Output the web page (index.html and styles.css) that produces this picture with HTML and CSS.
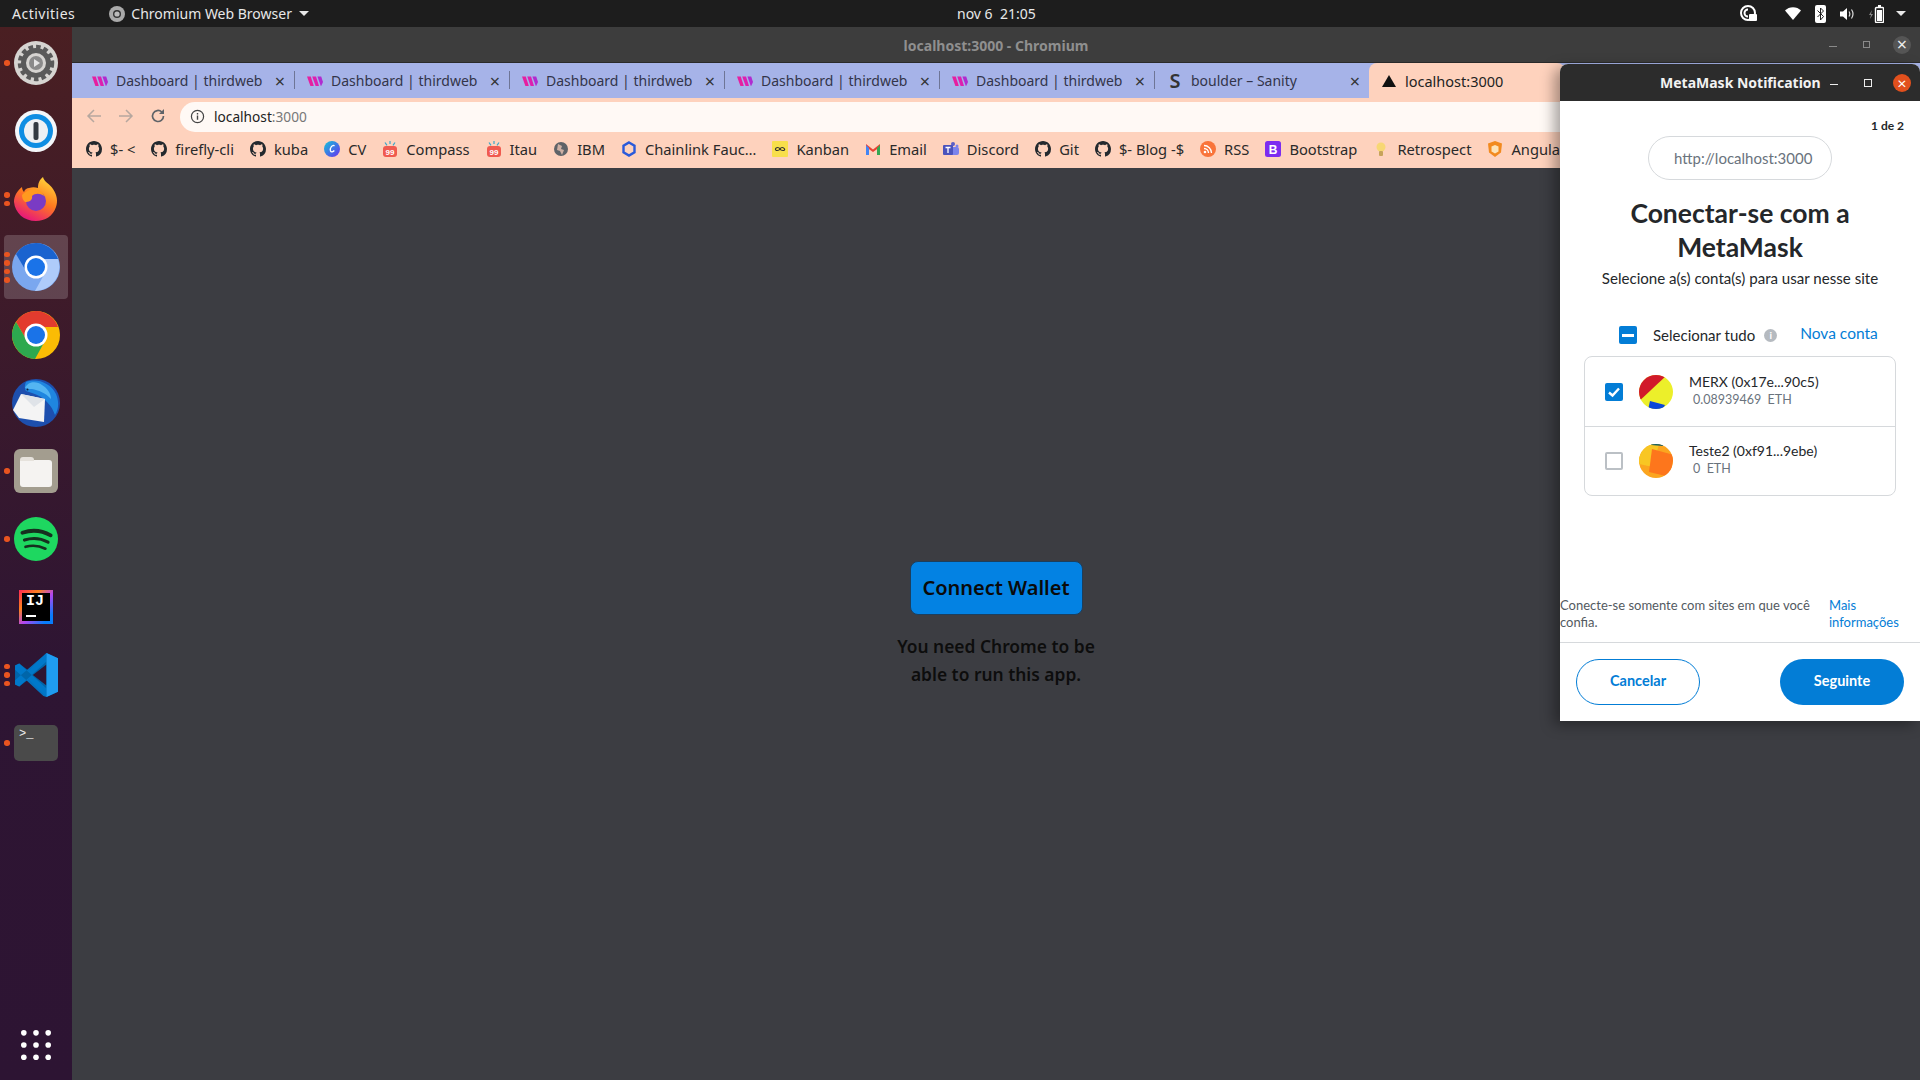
FILE: index.html
```html
<!DOCTYPE html>
<html lang="pt">
<head>
    <meta charset="UTF-8">
    <meta name="viewport" content="width=device-width, initial-scale=1.0">
    <title>localhost:3000 - Chromium</title>
    <link rel="stylesheet" href="styles.css">
</head>
<body>

    <!-- Simbolos reutilizados -->
    <svg class="sprites" width="0" height="0">
        <defs>
            <symbol id="github" viewBox="0 0 16 16">
                <path fill="#24292e" d="M8 0C3.58 0 0 3.58 0 8c0 3.54 2.29 6.53 5.47 7.59.4.07.55-.17.55-.38 0-.19-.01-.82-.01-1.49-2.01.37-2.53-.49-2.69-.94-.09-.23-.48-.94-.82-1.13-.28-.15-.68-.52-.01-.53.63-.01 1.08.58 1.23.82.72 1.21 1.87.87 2.33.66.07-.52.28-.87.51-1.07-1.78-.2-3.64-.89-3.64-3.95 0-.87.31-1.59.82-2.15-.08-.2-.36-1.02.08-2.12 0 0 .67-.21 2.2.82.64-.18 1.32-.27 2-.27.68 0 1.36.09 2 .27 1.53-1.04 2.2-.82 2.2-.82.44 1.1.16 1.92.08 2.12.51.56.82 1.27.82 2.15 0 3.07-1.87 3.75-3.65 3.95.29.25.54.73.54 1.48 0 1.07-.01 1.93-.01 2.2 0 .21.15.46.55.38A8.013 8.013 0 0016 8c0-4.42-3.58-8-8-8z"/>
            </symbol>
            <symbol id="thirdweb" viewBox="0 0 16 16">
                <path fill="#e61fa0" d="M0 3.500h3.800L6.800 13H3.400z"/>
                <path fill="#de1fb0" d="M5.200 3.500H9L12 13H8.600z"/>
                <path fill="#b02bd0" d="M10.400 3.500h3.800L16 9l-1.800 4H13.800z"/>
            </symbol>
            <symbol id="compass" viewBox="0 0 16 16">
                <path stroke="#3aa6c9" stroke-width="1.200" d="M8 0v3M3 1.500l2 2.900M13 1.500l-2 2.900"/>
                <rect fill="#f05a4f" x="1" y="5" width="14" height="11" rx="3"/>
                <text x="8" y="14" font-size="8" font-weight="700" text-anchor="middle" fill="#fff" font-family="Liberation Sans, sans-serif">99</text>
            </symbol>
        </defs>
    </svg>

    <!-- Barra superior do sistema -->
    <header class="topbar">
        <span class="activities">Activities</span>
        <span class="app-menu">
            <svg class="app-menu-icon" viewBox="0 0 16 16"><circle cx="8" cy="8" r="8" fill="#aaa"/><circle cx="8" cy="8" r="4" fill="#333"/><circle cx="8" cy="8" r="2.600" fill="#bbb"/></svg>
            Chromium Web Browser
            <i class="caret"></i>
        </span>
        <span class="clock">nov 6&nbsp; 21:05</span>
        <div class="tray">
            <svg class="tray-lock" viewBox="0 0 18 18"><circle cx="8" cy="8" r="7" fill="none" stroke="#fff" stroke-width="2"/><path d="M8 4.500a3.500 3.500 0 1 0 0 7" fill="none" stroke="#fff" stroke-width="2"/><rect x="9" y="9" width="8" height="7" rx="1" fill="#fff"/></svg>
            <svg class="tray-wifi" viewBox="0 0 16 13"><path fill="#fff" d="M0 3.500C4-1 12-1 16 3.500L8 13z"/></svg>
            <svg class="tray-bt" viewBox="0 0 11 18"><rect width="11" height="18" rx="2" fill="#fff"/><path d="M2.500 5.500l6 6L5.500 15V3l3 3-6 6" fill="none" stroke="#222" stroke-width="1"/></svg>
            <svg class="tray-sound" viewBox="0 0 15 14"><path fill="#fff" d="M0 4.500h3L7 1v12L3 9.500H0z"/><path d="M9 4.500c1 1.500 1 3.500 0 5M11.500 2.500c2 3 2 6 0 9" fill="none" stroke="#ddd" stroke-width="1.200"/></svg>
            <svg class="tray-batt" viewBox="0 0 15 18"><path fill="#888" d="M3 5 0 10h2l-1 4 3-5H2z"/><rect x="6.500" y="2.500" width="8" height="15" rx="1" fill="none" stroke="#fff" stroke-width="1.400"/><rect x="9" y="0" width="3" height="2" fill="#fff"/><rect x="8" y="5" width="5" height="11" fill="#fff"/></svg>
            <i class="caret"></i>
        </div>
    </header>

    <div class="desktop">
        <!-- Dock lateral -->
        <nav class="dock">
            <div class="dock-item">
                <span class="pips"><i></i></span>
                <svg viewBox="0 0 44 44" class="dock-icon">
                    <circle cx="22" cy="22" r="22" fill="#d6d4d1"/>
                    <circle cx="22" cy="22" r="12.500" fill="none" stroke="#5a5a5a" stroke-width="5"/>
                    <circle cx="22" cy="22" r="16" fill="none" stroke="#5a5a5a" stroke-width="4.500" stroke-dasharray="4.500 3"/>
                    <circle cx="22" cy="22" r="7" fill="#8a8a8a"/>
                    <path d="M20 18l6 4-6 4z" fill="#e4e4e4"/>
                </svg>
            </div>
            <div class="dock-item">
                <svg viewBox="0 0 44 44" class="dock-icon">
                    <circle cx="22" cy="22" r="21" fill="#f4f7fa"/>
                    <circle cx="22" cy="22" r="17" fill="#0f8ee3"/>
                    <circle cx="22" cy="22" r="12" fill="#eef1f4"/>
                    <rect x="19.500" y="13" width="5" height="18" rx="2" fill="#333a42"/>
                </svg>
            </div>
            <div class="dock-item">
                <span class="pips"><i></i><i></i></span>
                <svg viewBox="0 0 44 44" class="dock-icon">
                    <defs>
                        <linearGradient id="fox" x1="0.800" y1="0" x2="0.300" y2="1">
                            <stop offset="0" stop-color="#ffd93b"/>
                            <stop offset="0.500" stop-color="#ff7a1f"/>
                            <stop offset="1" stop-color="#e6127f"/>
                        </linearGradient>
                    </defs>
                    <path fill="url(#fox)" d="M29 0c1 5 7 7 10 12 4 6 5 12 3 18-3 9-11 14-20 14C10 44 1 36 0 25c0-6 3-11 8-15 0 2 1 4 2 5 1-3 3-4 5-4 3-1 6-1 9 0 0-4 1-8 5-11z"/>
                    <circle cx="22" cy="24" r="10" fill="#7a3bc4"/>
                    <path fill="#ff9a1f" d="M8 18c4-4 10-7 16-5 3 1 5 3 6 6-4-3-9-3-12 0 1 5-4 6-7 6-2-2-3-4-3-7z"/>
                </svg>
            </div>
            <div class="dock-item dock-item-active">
                <span class="pips"><i></i><i></i><i></i><i></i></span>
                <svg viewBox="0 0 48 48" class="dock-icon dock-icon-big">
                    <circle cx="24" cy="24" r="24" fill="#7aa7ef"/>
                    <path fill="#1a63cf" d="M24 0A24 24 0 0 0 4 11l10 17 10-12h22A24 24 0 0 0 24 0z"/>
                    <path fill="#aecbfa" d="M46 16h-22l10 12-11 20h1a24 24 0 0 0 22-32z"/>
                    <circle cx="24" cy="24" r="11.500" fill="#fff"/>
                    <circle cx="24" cy="24" r="9" fill="#1a73e8"/>
                </svg>
            </div>
            <div class="dock-item">
                <svg viewBox="0 0 48 48" class="dock-icon dock-icon-big">
                    <circle cx="24" cy="24" r="24" fill="#fbbc04"/>
                    <path fill="#e33b2e" d="M24 0A24 24 0 0 0 4 11l10 17 10-12h22A24 24 0 0 0 24 0z"/>
                    <path fill="#2da94f" d="M4 11A24 24 0 0 0 23 48l11-20-20 0z"/>
                    <circle cx="24" cy="24" r="11.500" fill="#fff"/>
                    <circle cx="24" cy="24" r="9" fill="#1a73e8"/>
                </svg>
            </div>
            <div class="dock-item">
                <svg viewBox="0 0 48 48" class="dock-icon dock-icon-big">
                    <circle cx="24" cy="24" r="24" fill="#1d4fae"/>
                    <path fill="#1f86e0" d="M14 3c10-4 24 0 30 12 3 7 3 15-1 21-3-9-10-18-23-22l-6-2c-2-3-1-7 0-9z"/>
                    <path fill="#54b5f2" d="M13 9c3-7 12-7 17-3 5 3 9 8 9 14-5-6-13-9-19-10-2 0-5 0-7-1z"/>
                    <circle cx="15.500" cy="10.500" r="1" fill="#14233f"/>
                    <path fill="#f4f4f4" d="M9 15 33 20l-1 23-25-4-6-8z"/>
                    <path fill="#dfe3e8" d="M9 15 33 20 22 28z"/>
                </svg>
            </div>
            <div class="dock-item">
                <span class="pips"><i></i></span>
                <div class="files-icon"><span class="folder"></span></div>
            </div>
            <div class="dock-item">
                <span class="pips"><i></i></span>
                <svg viewBox="0 0 42 42" class="dock-icon">
                    <circle cx="21" cy="21" r="21" fill="#1ed760"/>
                    <path d="M8 15c9-3 19-2 27 2.500" fill="none" stroke="#16301f" stroke-width="3.600" stroke-linecap="round"/>
                    <path d="M10 22c8-2.500 16-1.500 22.500 2" fill="none" stroke="#16301f" stroke-width="3" stroke-linecap="round"/>
                    <path d="M11 28.500c7-2 13-1.200 19 1.800" fill="none" stroke="#16301f" stroke-width="2.500" stroke-linecap="round"/>
                </svg>
            </div>
            <div class="dock-item">
                <div class="idea-icon"><div class="idea-inner">IJ<i></i></div></div>
            </div>
            <div class="dock-item">
                <span class="pips"><i></i><i></i><i></i></span>
                <svg viewBox="0 0 42 42" class="dock-icon">
                    <path fill="#0065a9" d="M31 0 14 17 5 10 1 12v18l4 2 9-7 17 17 11-5V5zM31 11v20L18 21z"/>
                    <path fill="#007acc" d="M1 12l4-2 26 24v8l-3-1L1 16zM1 30l4 2 26-24V0L1 26z" opacity="0.900"/>
                    <path fill="#1f9cf0" d="M31 0l11 5v32l-11 5z"/>
                </svg>
            </div>
            <div class="dock-item">
                <span class="pips"><i></i></span>
                <div class="term-icon">&gt;_</div>
            </div>
            <svg viewBox="0 0 32 32" class="apps-grid">
                <g fill="#fff">
                    <circle cx="3" cy="3" r="3"/><circle cx="16" cy="3" r="3"/><circle cx="29" cy="3" r="3"/>
                    <circle cx="3" cy="16" r="3"/><circle cx="16" cy="16" r="3"/><circle cx="29" cy="16" r="3"/>
                    <circle cx="3" cy="29" r="3"/><circle cx="16" cy="29" r="3"/><circle cx="29" cy="29" r="3"/>
                </g>
            </svg>
        </nav>

        <!-- Janela do navegador -->
        <main class="browser">
            <div class="titlebar">
                <span class="title-text">localhost:3000 - Chromium</span>
                <div class="win-controls">
                    <i class="win-min"></i>
                    <i class="win-restore"></i>
                    <span class="win-close">&times;</span>
                </div>
            </div>

            <div class="tabstrip">
                <div class="tab"><svg class="fav"><use href="#thirdweb"/></svg><span class="tab-title">Dashboard | thirdweb</span><span class="tab-x">&times;</span></div>
                <div class="tab"><svg class="fav"><use href="#thirdweb"/></svg><span class="tab-title">Dashboard | thirdweb</span><span class="tab-x">&times;</span></div>
                <div class="tab"><svg class="fav"><use href="#thirdweb"/></svg><span class="tab-title">Dashboard | thirdweb</span><span class="tab-x">&times;</span></div>
                <div class="tab"><svg class="fav"><use href="#thirdweb"/></svg><span class="tab-title">Dashboard | thirdweb</span><span class="tab-x">&times;</span></div>
                <div class="tab"><svg class="fav"><use href="#thirdweb"/></svg><span class="tab-title">Dashboard | thirdweb</span><span class="tab-x">&times;</span></div>
                <div class="tab tab-last"><span class="fav fav-s">S</span><span class="tab-title">boulder – Sanity</span><span class="tab-x">&times;</span></div>
                <div class="tab tab-active"><svg class="fav" viewBox="0 0 16 16"><path d="M8 2l7 12H1z" fill="#111"/></svg><span class="tab-title">localhost:3000</span></div>
            </div>

            <div class="toolbar">
                <svg class="nav-btn" viewBox="0 0 16 16"><path d="M15 8H2M8 2 2 8l6 6" fill="none" stroke="#b6a79f" stroke-width="1.500"/></svg>
                <svg class="nav-btn" viewBox="0 0 16 16"><path d="M1 8h13M8 2l6 6-6 6" fill="none" stroke="#b6a79f" stroke-width="1.500"/></svg>
                <svg class="nav-btn" viewBox="0 0 16 16"><path d="M13.500 8A5.500 5.500 0 1 1 11.800 4" fill="none" stroke="#5f6368" stroke-width="1.700"/><path d="M14 1v5H9z" fill="#5f6368"/></svg>
                <div class="omnibox">
                    <svg class="omni-info" viewBox="0 0 16 16"><circle cx="8" cy="8" r="6.500" fill="none" stroke="#444" stroke-width="1.300"/><path d="M8 7v4.500M8 4.300v1.500" stroke="#444" stroke-width="1.500"/></svg>
                    <span class="omni-host">localhost</span><span class="omni-port">:3000</span>
                </div>
            </div>

            <div class="bookmarks">
                <span class="bm"><svg class="bm-ico"><use href="#github"/></svg>$- &lt;</span>
                <span class="bm"><svg class="bm-ico"><use href="#github"/></svg>firefly-cli</span>
                <span class="bm"><svg class="bm-ico"><use href="#github"/></svg>kuba</span>
                <span class="bm"><svg class="bm-ico" viewBox="0 0 16 16"><defs><linearGradient id="cv" x1="0" y1="0" x2="1" y2="1"><stop offset="0" stop-color="#13c4d8"/><stop offset="1" stop-color="#6a2ff0"/></linearGradient></defs><circle cx="8" cy="8" r="8" fill="url(#cv)"/><path d="M10.500 5c-2-2-5 2-4 5 .6 1.500 2.600 1 3.800-.5" fill="none" stroke="#fff" stroke-width="1.300"/></svg>CV</span>
                <span class="bm"><svg class="bm-ico"><use href="#compass"/></svg>Compass</span>
                <span class="bm"><svg class="bm-ico"><use href="#compass"/></svg>Itau</span>
                <span class="bm"><svg class="bm-ico" viewBox="0 0 16 16"><circle cx="8" cy="8" r="7" fill="#5f6368"/><path d="M5 3l4 2-1 3 3 1-2 5-2-4-3-1z" fill="#fed2bd" opacity="0.700"/></svg>IBM</span>
                <span class="bm"><svg class="bm-ico" viewBox="0 0 16 16"><path d="M8 1.500l5.500 3.200v6.600L8 14.500l-5.500-3.200V4.700z" fill="none" stroke="#2a5ada" stroke-width="2.400"/></svg>Chainlink Fauc…</span>
                <span class="bm"><svg class="bm-ico" viewBox="0 0 16 16"><rect width="16" height="16" rx="1" fill="#f8df4b"/><path d="M8 8c-1-2-4-2-4.500 0S7 10 8 8s3.500-2 4.500 0S9 10 8 8z" fill="none" stroke="#333" stroke-width="1.200"/></svg>Kanban</span>
                <span class="bm"><svg class="bm-ico" viewBox="0 0 16 16"><path fill="#ea4335" d="M1 3l7 5.500L15 3v3L8 11 1 6z"/><path fill="#4285f4" d="M1 4v10h3V7z"/><path fill="#34a853" d="M15 4v10h-3V7z"/></svg>Email</span>
                <span class="bm"><svg class="bm-ico" viewBox="0 0 16 16"><circle cx="10" cy="3" r="2" fill="#5b5fc7"/><circle cx="14" cy="5" r="1.500" fill="#7b83eb"/><rect x="7" y="6" width="9" height="8" rx="2" fill="#7b83eb"/><rect x="0" y="4" width="10" height="10" rx="1" fill="#4b53bc"/><path d="M2.500 6.500h5M5 6.500V12" stroke="#fff" stroke-width="1.300"/></svg>Discord</span>
                <span class="bm"><svg class="bm-ico"><use href="#github"/></svg>Git</span>
                <span class="bm"><svg class="bm-ico"><use href="#github"/></svg>$- Blog -$</span>
                <span class="bm"><svg class="bm-ico" viewBox="0 0 16 16"><circle cx="8" cy="8" r="8" fill="#f9743a"/><circle cx="5" cy="11" r="1.300" fill="#fff"/><path d="M4 7.500A4.500 4.500 0 0 1 8.500 12M4 4.500A7.500 7.500 0 0 1 11.500 12" fill="none" stroke="#fff" stroke-width="1.300"/></svg>RSS</span>
                <span class="bm"><svg class="bm-ico" viewBox="0 0 16 16"><rect width="16" height="16" rx="2.500" fill="#7c2cf0"/><text x="8" y="12.500" font-size="12" font-weight="700" text-anchor="middle" fill="#fff" font-family="Liberation Sans, sans-serif">B</text></svg>Bootstrap</span>
                <span class="bm"><svg class="bm-ico" viewBox="0 0 16 16"><circle cx="8" cy="6" r="4.500" fill="#f7d774"/><rect x="6" y="10" width="4" height="5" rx="1" fill="#c7a35a"/></svg>Retrospect</span>
                <span class="bm"><svg class="bm-ico" viewBox="0 0 16 16"><path d="M8 0l7 2.500-1 9L8 16l-6-4.500-1-9z" fill="#f28a1e"/><path d="M8 4l3.500 1.500v5L8 12.500 4.500 10.500v-5z" fill="#fde3b8"/></svg>Angular</span>
            </div>

            <div class="page">
                <button class="connect-btn">Connect Wallet</button>
                <p class="page-note">You need Chrome to be<br>able to run this app.</p>
            </div>
        </main>

        <!-- Janela de notificacao da MetaMask -->
        <section class="popup">
            <div class="popup-bar">
                <span class="popup-title">MetaMask Notification</span>
                <i class="win-min popup-min"></i>
                <i class="popup-max"></i>
                <span class="popup-close">&times;</span>
            </div>
            <div class="popup-body">
                <div class="step">1 de 2</div>
                <div class="origin">http://localhost:3000</div>
                <h2 class="mm-title">Conectar-se com a<br>MetaMask</h2>
                <p class="mm-sub">Selecione a(s) conta(s) para usar nesse site</p>
                <div class="select-row">
                    <span class="check check-on"><i class="dash"></i></span>
                    <span class="select-label">Selecionar tudo</span>
                    <span class="info-dot">i</span>
                    <a class="new-account">Nova conta</a>
                </div>
                <div class="accounts">
                    <div class="account">
                        <span class="check check-on">
                            <svg viewBox="0 0 18 18"><path d="M4 9.500l3.500 3L14 5.500" fill="none" stroke="#fff" stroke-width="2.400"/></svg>
                        </span>
                        <svg class="avatar" viewBox="0 0 34 34">
                            <rect width="34" height="34" fill="#ecef2a"/>
                            <path d="M0 0h28L-2 28z" fill="#d11a2a"/>
                            <path d="M11 26l15 4-3 6-14-1z" fill="#0a47d8"/>
                        </svg>
                        <div class="account-info">
                            <div class="account-name">MERX (0x17e...90c5)</div>
                            <div class="account-bal">0.08939469 &nbsp;ETH</div>
                        </div>
                    </div>
                    <div class="account account-next">
                        <span class="check"></span>
                        <svg class="avatar" viewBox="0 0 34 34">
                            <rect width="34" height="34" fill="#fba51f"/>
                            <path d="M0 0h20l-6 23L0 20z" fill="#f8c623"/>
                            <path d="M13 5l22 6-4 22-21-5z" fill="#fd761c"/>
                            <path d="M12 0h12v2l-12-1z" fill="#115e67"/>
                        </svg>
                        <div class="account-info">
                            <div class="account-name">Teste2 (0xf91...9ebe)</div>
                            <div class="account-bal">0 &nbsp;ETH</div>
                        </div>
                    </div>
                </div>
                <div class="trust">
                    <span class="trust-text">Conecte-se somente com sites em que você confia.</span>
                    <a class="trust-link">Mais informações</a>
                </div>
                <div class="actions">
                    <button class="mm-btn mm-cancel">Cancelar</button>
                    <button class="mm-btn mm-next">Seguinte</button>
                </div>
            </div>
        </section>
    </div>

</body>
</html>
```

FILE: styles.css
```css
* {
    box-sizing: border-box;
}

body {
    margin: 0;
    width: 1920px;
    height: 1080px;
    overflow: hidden;
    font-family: "Noto Sans", sans-serif;
    background: #3c3d42;
}

.sprites {
    position: absolute;
}

/* Barra superior */
.topbar {
    position: relative;
    height: 27px;
    display: flex;
    align-items: center;
    background: #1d1d1d;
    color: #e8e8e8;
    font-size: 14px;
}

.activities {
    margin-left: 12px;
    letter-spacing: 0.5px;
}

.app-menu {
    display: flex;
    align-items: center;
    margin-left: 34px;
}

.app-menu-icon {
    width: 16px;
    height: 16px;
    margin-right: 6px;
}

.caret {
    display: inline-block;
    border-left: 5px solid transparent;
    border-right: 5px solid transparent;
    border-top: 5px solid #e8e8e8;
    margin-left: 7px;
}

.clock {
    position: absolute;
    left: 957px;
    width: 78px;
    white-space: nowrap;
    text-align: center;
}

.tray {
    margin-left: auto;
    display: flex;
    align-items: center;
    gap: 14px;
    padding-right: 14px;
}

.tray .caret {
    margin-left: -2px;
}

.tray-lock {
    width: 18px;
    height: 18px;
    margin-right: 13px;
}

.tray-wifi {
    width: 16px;
    height: 13px;
}

.tray-bt {
    width: 11px;
    height: 18px;
}

.tray-sound {
    width: 15px;
    height: 14px;
}

.tray-batt {
    width: 15px;
    height: 18px;
}

/* Area de trabalho */
.desktop {
    position: relative;
    display: flex;
    height: 1053px;
}

/* Dock */
.dock {
    width: 72px;
    flex-shrink: 0;
    display: flex;
    flex-direction: column;
    align-items: center;
    padding-top: 2px;
    background: linear-gradient(180deg, #4a1f22 0%, #3c1a2b 30%, #2e1533 60%, #2d1433 100%);
}

.dock-item {
    position: relative;
    width: 64px;
    height: 68px;
    display: flex;
    align-items: center;
    justify-content: center;
    flex-shrink: 0;
}

.dock-item-active {
    background: rgba(255, 255, 255, 0.18);
    border-radius: 4px;
    height: 64px;
    margin: 2px 0;
}

.pips {
    position: absolute;
    left: 0;
    top: 0;
    bottom: 0;
    width: 6px;
    display: flex;
    flex-direction: column;
    justify-content: center;
    gap: 3px;
}

.pips i {
    width: 5.500px;
    height: 5.500px;
    border-radius: 50%;
    background: #e95420;
}

.dock-icon {
    width: 44px;
    height: 44px;
}

.dock-icon-big {
    width: 48px;
    height: 48px;
}

.files-icon {
    width: 44px;
    height: 44px;
    padding: 9px 6px 8px;
    background: #a39d8f;
    border-radius: 6px;
}

.folder {
    position: relative;
    display: block;
    height: 100%;
    margin-top: 2px;
    background: #f5f3f1;
    border-radius: 0 3px 3px 3px;
}

.folder::before {
    content: "";
    position: absolute;
    left: 0;
    top: -3px;
    width: 14px;
    height: 4px;
    background: #e6e2dc;
    border-radius: 3px 3px 0 0;
}

.idea-icon {
    width: 34px;
    height: 34px;
    padding: 3px;
    background: linear-gradient(135deg, #fe2857 0%, #fc801d 30%, #b345f1 55%, #087cfa 85%);
}

.idea-inner {
    position: relative;
    height: 100%;
    padding: 1px 0 0 4px;
    background: #000;
    color: #fff;
    font-family: "Liberation Mono", monospace;
    font-size: 15px;
    font-weight: 700;
    line-height: 15px;
}

.idea-inner i {
    position: absolute;
    left: 4px;
    bottom: 4px;
    width: 10px;
    height: 2px;
    background: #fff;
}

.term-icon {
    width: 44px;
    height: 36px;
    padding-left: 5px;
    background: #4a4a4a;
    border-radius: 5px;
    color: #eee;
    font-family: "Liberation Mono", monospace;
    font-size: 12px;
    line-height: 18px;
}

.apps-grid {
    width: 30px;
    height: 30px;
    margin-top: auto;
    margin-bottom: 20px;
}

/* Navegador */
.browser {
    flex: 1;
    display: flex;
    flex-direction: column;
    min-width: 0;
}

.titlebar {
    height: 36px;
    padding-top: 2px;
    display: flex;
    align-items: center;
    justify-content: center;
    position: relative;
    background: #3d3d3d;
    border-bottom: 1px solid #2a2a2a;
}

.title-text {
    color: #8f8f8f;
    font-size: 14px;
    font-weight: 700;
}

.win-controls {
    position: absolute;
    right: 9px;
    top: 0;
    height: 100%;
    display: flex;
    align-items: center;
    gap: 20px;
}

.win-min {
    display: block;
    width: 8px;
    height: 1px;
    background: #8a8a8a;
    margin-top: 4px;
}

.win-restore {
    display: block;
    width: 7px;
    height: 7px;
    border: 1px solid #8a8a8a;
    margin-left: 6px;
}

.win-close {
    width: 18px;
    height: 18px;
    margin-left: 3px;
    border-radius: 50%;
    background: #555;
    color: #eee;
    font-size: 18px;
    line-height: 17px;
    text-align: center;
}

.tabstrip {
    height: 35px;
    display: flex;
    background: #a6b3e8;
    padding-left: 8px;
    color: #33354a;
    font-size: 14px;
}

.tab {
    position: relative;
    width: 215px;
    display: flex;
    align-items: center;
    padding-left: 12px;
}

.tab::after {
    content: "";
    position: absolute;
    right: 0;
    top: 8px;
    bottom: 9px;
    width: 1px;
    background: #6e7596;
}

.tab-last::after {
    display: none;
}

.tab-active {
    width: 196px;
    margin-left: -1px;
    padding-left: 12px;
    height: 100%;
    background: #fed2bd;
    border-radius: 8px 8px 0 0;
    color: #222;
    font-size: 14.500px;
}

.tab-active::after {
    display: none;
}

.fav {
    width: 16px;
    height: 16px;
    margin-right: 8px;
    flex-shrink: 0;
}

.fav-s {
    color: #333;
    font-size: 20px;
    font-weight: 600;
    line-height: 16px;
    text-align: center;
}

.tab-title {
    white-space: nowrap;
}

.tab-x {
    margin-left: auto;
    margin-right: 10px;
    font-size: 18px;
    line-height: 1;
    color: #333;
}

.toolbar {
    height: 34px;
    padding: 4px 0 0 14px;
    display: flex;
    align-items: flex-start;
    background: #fed2bd;
}

.nav-btn {
    width: 16px;
    height: 16px;
    margin: 6px 16px 0 0;
}

.omnibox {
    width: 1400px;
    height: 30px;
    margin-left: -2px;
    padding: 0 0 2px 10px;
    display: flex;
    align-items: center;
    background: #fff9f5;
    border-radius: 15px;
    font-size: 13.700px;
}

.omni-info {
    width: 15px;
    height: 15px;
    margin-right: 9px;
}

.omni-host {
    color: #222;
}

.omni-port {
    color: #777;
}

.bookmarks {
    height: 36px;
    padding: 0 0 2px 14px;
    display: flex;
    align-items: center;
    gap: 16px;
    background: #fed2bd;
    color: #2a2a2a;
    font-size: 14.700px;
    white-space: nowrap;
    overflow: hidden;
}

.bm {
    display: flex;
    align-items: center;
    gap: 8px;
}

.bm-ico {
    width: 16px;
    height: 16px;
    flex-shrink: 0;
}

/* Conteudo da pagina */
.page {
    flex: 1;
    display: flex;
    flex-direction: column;
    align-items: center;
    justify-content: center;
    background: #3c3d42;
}

.connect-btn {
    width: 173px;
    height: 54px;
    border: 1px solid #1c3f5e;
    border-radius: 8px;
    background: #0382e3;
    color: #0a0a0a;
    font-family: inherit;
    font-size: 20px;
    font-weight: 600;
}

.page-note {
    margin: 17px 0 0;
    color: #0d0d0d;
    font-size: 17.400px;
    font-weight: 600;
    line-height: 28px;
    text-align: center;
}

/* Popup MetaMask */
.popup {
    position: absolute;
    left: 1560px;
    top: 37px;
    width: 360px;
    height: 657px;
    display: flex;
    flex-direction: column;
    border-radius: 8px 8px 0 0;
    overflow: hidden;
    background: #fff;
    box-shadow: -6px 4px 14px rgba(0, 0, 0, 0.35);
    font-family: "Lato", sans-serif;
}

.popup-bar {
    height: 37px;
    flex-shrink: 0;
    display: flex;
    align-items: center;
    background: #2c2c2c;
    color: #f2f2f2;
    padding-left: 100px;
}

.popup-title {
    width: 170px;
    font-family: "Noto Sans", sans-serif;
    font-size: 14px;
    font-weight: 700;
    white-space: nowrap;
}

.popup-min {
    background: #eee;
    margin-left: 0;
}

.popup-max {
    width: 8px;
    height: 8px;
    border: 1px solid #eee;
    margin-left: 26px;
}

.popup-close {
    width: 18px;
    height: 18px;
    margin-left: 21px;
    border-radius: 50%;
    background: #e2501d;
    color: #fff;
    font-size: 16px;
    line-height: 17px;
    text-align: center;
}

.popup-body {
    flex: 1;
    display: flex;
    flex-direction: column;
    color: #24272a;
}

.step {
    margin: 17px 16px 0 0;
    text-align: right;
    font-size: 12px;
    font-weight: 700;
    line-height: 16px;
}

.origin {
    width: 184px;
    height: 44px;
    margin: 2px 0 0 88px;
    padding-left: 25px;
    border: 1px solid #d6d9dc;
    border-radius: 22px;
    color: #6a737d;
    font-size: 15px;
    line-height: 42px;
}

.mm-title {
    margin: 16px 0 0;
    text-align: center;
    font-size: 26.500px;
    font-weight: 700;
    line-height: 34px;
}

.mm-sub {
    margin: 4px 0 0;
    text-align: center;
    font-size: 15.100px;
    line-height: 20px;
}

.select-row {
    display: flex;
    align-items: center;
    height: 24px;
    margin: 35px 0 0 59px;
    font-size: 15px;
}

.check {
    width: 18px;
    height: 18px;
    flex-shrink: 0;
    display: flex;
    align-items: center;
    justify-content: center;
    border: 2px solid #bbc0c5;
    border-radius: 2px;
    background: #fff;
}

.check-on {
    border: none;
    background: #037dd6;
}

.check svg {
    width: 18px;
    height: 18px;
}

.dash {
    width: 12px;
    height: 3px;
    background: #fff;
}

.select-label {
    margin-left: 16px;
}

.info-dot {
    width: 13px;
    height: 13px;
    margin-left: 9px;
    border-radius: 50%;
    background: #b5bac0;
    color: #fff;
    font-size: 10px;
    font-weight: 700;
    line-height: 13px;
    text-align: center;
}

.new-account {
    margin: -4px 0 0 23px;
    color: #037dd6;
    font-size: 15.500px;
}

.accounts {
    width: 312px;
    margin: 9px 0 0 24px;
    border: 1px solid #d6d9dc;
    border-radius: 8px;
}

.account {
    height: 69px;
    display: flex;
    align-items: center;
    padding-left: 20px;
}

.account-next {
    height: 69px;
    border-top: 1px solid #d6d9dc;
}

.avatar {
    width: 34px;
    height: 34px;
    margin-left: 16px;
    border-radius: 50%;
    flex-shrink: 0;
}

.account-info {
    margin: -4px 0 0 16px;
}

.account-name {
    font-size: 14px;
    line-height: 20px;
}

.account-bal {
    margin-left: 4px;
    color: #6a737d;
    font-size: 12.500px;
    line-height: 16px;
}

.trust {
    display: flex;
    margin-top: auto;
    color: #535a61;
    font-size: 13px;
    line-height: 17px;
}

.trust-text {
    width: 260px;
}

.trust-link {
    width: 80px;
    margin-left: 9px;
    color: #037dd6;
}

.actions {
    display: flex;
    justify-content: space-between;
    height: 79px;
    margin-top: 11px;
    padding: 16px 16px 0;
    border-top: 1px solid #d6d9dc;
}

.mm-btn {
    width: 124px;
    height: 46px;
    padding-bottom: 4px;
    border-radius: 23px;
    font-family: inherit;
    font-size: 14.500px;
    font-weight: 700;
}

.mm-cancel {
    border: 1px solid #037dd6;
    background: #fff;
    color: #037dd6;
}

.mm-next {
    border: none;
    background: #037dd6;
    color: #fff;
}
```
